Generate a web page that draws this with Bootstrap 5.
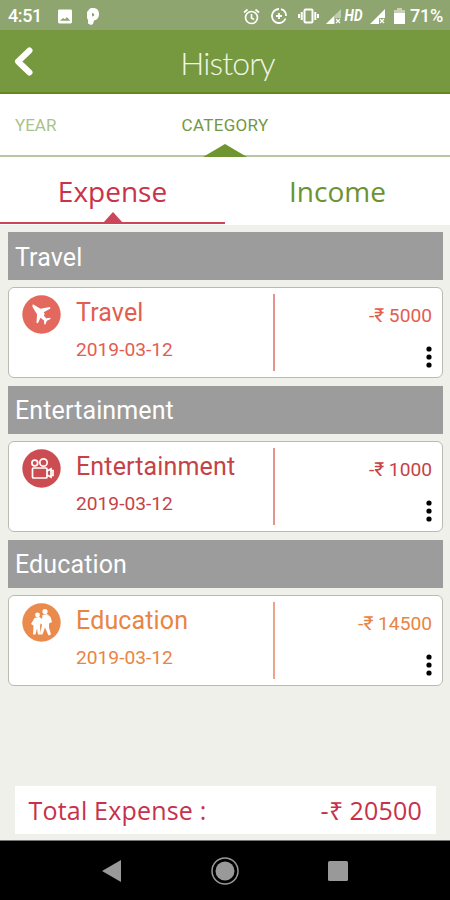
<!DOCTYPE html>
<html lang="en">
<head>
<meta charset="utf-8">
<meta name="viewport" content="width=device-width, initial-scale=1">
<title>History</title>
<link href="https://cdn.jsdelivr.net/npm/bootstrap@5.3.0/dist/css/bootstrap.min.css" rel="stylesheet">
<style>
body{font-family:Roboto,sans-serif;background:#eff0ea;line-height:1}
svg{display:block;flex:none}
.phone{width:450px;height:900px;overflow:hidden}
.statusbar{height:30px;background:#8fa56f;color:#fff;font-size:18px;font-weight:500;padding:2px 7px 0 8px}
.statusbar .hd{font-size:16px;font-style:italic;font-weight:700;transform:scaleX(.85)}
.statusbar .clock{width:33px;letter-spacing:-.4px}
.appbar{height:64px;background:#76983f;border-bottom:2px solid #608a1c;padding-left:13px}
.appbar h1{font-family:Lato,sans-serif;font-weight:300;font-size:32px;color:#f0f5e5;letter-spacing:-.9px;line-height:1}
.side{width:24px}
.modes{height:63px;background:#fefffe;border-bottom:2px solid #b9c4a5;font-size:17px;color:#75983e}
.modes .year{width:125px;padding:23px 0 0 15px;opacity:.6}
.modes .pick{width:200px;padding-top:23px;position:relative;letter-spacing:.3px}
.tri{position:absolute;left:50%;transform:translateX(-50%)}
.modes .tri{bottom:-2px}
.kinds{height:68px;background:#fefffe;font-family:"Open Sans",sans-serif;font-size:28px}
.kinds .kind{position:relative;padding-top:20px;height:67px;line-height:1}
.kinds .on{color:#cb3249;border-bottom:2px solid #cd4557}
.kinds .tri{bottom:-1px}
.green{color:#6c9231}
.list{padding:7px 7px 0 8px;height:561px}
.group{height:48px;background:#9c9c9c;color:#fff;font-size:25px;letter-spacing:.12px;padding:2px 7px 0;margin-bottom:7.25px}
.entry{height:91px;margin-bottom:7.5px;background:#fff;border:1px solid #b9bab1;border-radius:6px;padding:6px 9px 7px 13px}
.entry .what{width:253px;border-right:2px solid #e3968f;gap:15px;height:77px}
.entry .what>svg{margin-top:1px}
.entry .name{font-size:25px;letter-spacing:.15px;line-height:28px;margin-top:5px}
.entry .date{font-size:19.2px;line-height:22px;margin-top:12px}
.entry .amt{font-size:19.2px;line-height:22px;padding:11px 1px 0 0}
.c1{color:#e35d50}.c2{color:#c64246}.c3{color:#e98443}
.c3 .what{border-color:#e9a58a}
.bottom{height:54px}
.total{height:48px;margin:0 6px 0 6.5px;background:#fff;color:#c7314a;font-family:"Open Sans",sans-serif;font-size:25px;letter-spacing:.2px;padding:0 14px}
.navkeys{height:60px;background:#000;border-top:1px solid #777;gap:89px}
</style>
<script src="https://cdn.jsdelivr.net/npm/bootstrap@5.3.0/dist/js/bootstrap.bundle.min.js"></script>
</head>
<body>
<svg width="0" height="0" class="position-absolute"><defs><g id="dots"><circle cx="4" cy="3" r="2.600"/><circle cx="4" cy="11" r="2.600"/><circle cx="4" cy="19" r="2.600"/></g></defs></svg>
<main class="phone d-flex flex-column">
<div class="statusbar d-flex align-items-center justify-content-between flex-shrink-0">
  <div class="d-flex align-items-center">
    <span class="clock">4:51</span>
    <svg style="margin-left:17px" width="14" height="15" viewBox="0 0 15 15"><path fill="#fff" fill-rule="evenodd" d="M1.500 0h12A1.500 1.500 0 0 1 15 1.500v12a1.500 1.500 0 0 1-1.500 1.500h-12A1.500 1.500 0 0 1 0 13.500v-12A1.500 1.500 0 0 1 1.500 0zM2 12h11L9.500 8 7.500 10.500 5.500 9z"/></svg>
    <svg style="margin-left:14px" width="14" height="17" viewBox="0 0 14 17"><path fill="#fff" fill-rule="evenodd" d="M4 .5c5-1.500 9 .5 9 5.500s-3 6-5 6.500l-1 3.500-2 1-3-1.500V12L1 10V4zM6 5v3.500c3 0 3-3.500 0-3.500z"/></svg>
  </div>
  <div class="d-flex align-items-center">
    <svg width="17" height="17" viewBox="0 0 17 17" fill="none" stroke="#fff" stroke-width="1.700"><circle cx="8.500" cy="9.500" r="6"/><path d="M1 4.500 4.500 1.500M16 4.500 12.500 1.500M8.500 6v4l2.500 1.500"/></svg>
    <svg style="margin-left:11px" width="16" height="16" viewBox="0 0 16 16" fill="none" stroke="#fff" stroke-width="1.800"><path d="M8 1A7 7 0 1 0 14.500 10.500M10 1.200A7 7 0 0 1 15 8M8 5v6M5 8h6"/></svg>
    <svg style="margin-left:11px" width="21" height="16" viewBox="0 0 21 16" fill="none" stroke="#fff" stroke-width="2"><rect x="6.500" y="1.500" width="8" height="13" rx="1"/><path d="M3.700 4v8M17.300 4v8M1 6v4M20 6v4"/></svg>
    <svg style="margin-left:7px" width="15" height="15" viewBox="0 0 15 15"><path fill="#c0ccaf" d="M15 0v9H9v6H0z"/><path fill="#fff" d="M8 7v8H0z"/><path d="m10 10 4 4m0-4-4 4" stroke="#fff" stroke-width="1.200"/></svg>
    <span class="hd" style="margin-left:2px">HD</span>
    <svg style="margin-left:6px;margin-right:1px" width="15" height="15" viewBox="0 0 15 15"><path fill="#fff" d="M15 0v9H9v6H0z"/><path d="m10 10 4 4m0-4-4 4" stroke="#fff" stroke-width="1.200"/></svg>
    <svg style="margin-left:8px" width="11" height="16" viewBox="0 0 11 16"><path fill="#c6d1b5" d="M3 0h5v2h3v4H0V2h3z"/><path fill="#fff" d="M0 5h11v11H0z"/></svg>
    <span style="margin-left:5px;letter-spacing:-.2px">71%</span>
  </div>
</div>
<header class="appbar d-flex align-items-center flex-shrink-0">
  <svg class="side" width="20" height="30" viewBox="0 0 24 30"><path d="M16.500 4.500 5 15.500l11.500 11" fill="none" stroke="#fff" stroke-width="6" stroke-linecap="round" stroke-linejoin="round"/></svg>
  <h1 class="m-0 flex-fill text-center pe-4 me-2 pt-1">History</h1>
</header>
<nav class="modes d-flex flex-shrink-0">
  <div class="year">YEAR</div>
  <div class="pick flex-shrink-0 text-center">CATEGORY
    <svg class="tri" width="44" height="13" viewBox="0 0 44 13"><path d="M0 13 22 0l22 13z" fill="#6e952f"/></svg></div>
</nav>
<nav class="kinds d-flex flex-shrink-0 text-center">
  <div class="kind on w-50">Expense<svg class="tri" width="20" height="11" viewBox="0 0 20 11"><path d="M0 11 10 0l10 11z" fill="#cb4658"/></svg></div>
  <div class="kind green w-50">Income</div>
</nav>
<section class="list flex-shrink-0">
  <div class="group d-flex align-items-center">Travel</div>
  <article class="entry d-flex c1">
    <div class="what d-flex">
      <svg width="39" height="39" viewBox="0 0 39 39"><circle cx="19.500" cy="19.500" r="19.200" fill="#e3685d"/><path fill="#fff" d="M10.500 9.700q1.200-.4 2.500.8l5.500 3.200 9.300-1.800.7 1.500-6.800 3.900 1 1.500-.8 2 2.300 2.400 4-.5.4 1.200-3.700 1.900-1.500 3.700-1.200-.2-.2-3.700-3.500-2.900-2.600 5.500-1.400-.5.500-8.500-4-6.500q-1.100-1.700-.5-3z"/></svg>
      <div><div class="name">Travel</div><div class="date">2019-03-12</div></div>
    </div>
    <div class="flex-fill d-flex flex-column align-items-end justify-content-between"><div class="amt">-₹ 5000</div><svg width="8" height="24" fill="#000"><use href="#dots"/></svg></div>
  </article>
  <div class="group d-flex align-items-center">Entertainment</div>
  <article class="entry d-flex c2">
    <div class="what d-flex">
      <svg width="39" height="39" viewBox="0 0 39 39"><circle cx="19.500" cy="19.500" r="19.200" fill="#cb4d52"/><g fill="none" stroke="#fff" stroke-width="1.700"><circle cx="12.800" cy="14" r="2.900"/><circle cx="21.500" cy="13.500" r="3.700"/><rect x="10.500" y="19" width="14.500" height="10" rx="1"/><path d="m25 22 4-2v8l-4-2M29 21.500h2v5h-2"/></g></svg>
      <div><div class="name">Entertainment</div><div class="date">2019-03-12</div></div>
    </div>
    <div class="flex-fill d-flex flex-column align-items-end justify-content-between"><div class="amt">-₹ 1000</div><svg width="8" height="24" fill="#000"><use href="#dots"/></svg></div>
  </article>
  <div class="group d-flex align-items-center">Education</div>
  <article class="entry d-flex c3">
    <div class="what d-flex">
      <svg width="39" height="39" viewBox="0 0 39 39"><circle cx="19.500" cy="19.500" r="19.200" fill="#ea8a4c"/><g fill="#fff"><circle cx="15.500" cy="12" r="2.400"/><circle cx="23" cy="8.500" r="2.600"/><path d="m12.500 15 5-1 2.500 2 .5-4 4.500-1 3.500 3 1.500 5-3 1.500 0 4 2 7-2.500 1-3.500-8-2.500 7-2.500 0 2-10-1.500-1-.5 3 .5 8-2.500 0-1-6-1.500 6-2.500 0 .5-9-2.500-1.500z"/></g></svg>
      <div><div class="name">Education</div><div class="date">2019-03-12</div></div>
    </div>
    <div class="flex-fill d-flex flex-column align-items-end justify-content-between"><div class="amt">-₹ 14500</div><svg width="8" height="24" fill="#000"><use href="#dots"/></svg></div>
  </article>
</section>
<div class="bottom px-2 flex-shrink-0"><div class="total d-flex align-items-center justify-content-between"><span>Total Expense :</span><span>-₹ 20500</span></div></div>
<footer class="navkeys d-flex align-items-center justify-content-center flex-shrink-0">
  <svg width="20" height="22" viewBox="0 0 20 22"><path d="M0 11 19 0v22z" fill="#999"/></svg>
  <svg width="28" height="28" viewBox="0 0 28 28"><circle cx="14" cy="14" r="13" fill="none" stroke="#999" stroke-width="1.500"/><circle cx="14" cy="14" r="9.500" fill="#999"/></svg>
  <svg width="20" height="20" viewBox="0 0 20 20"><rect width="20" height="20" rx="1.500" fill="#999"/></svg>
</footer>
</main>
</body>
</html>
